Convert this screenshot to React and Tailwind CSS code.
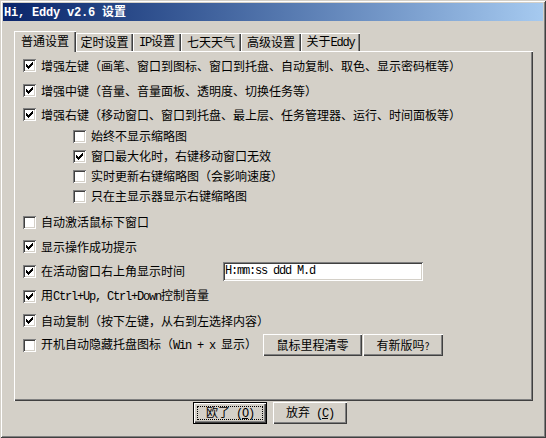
import { useState } from "react";

const CHECK_COLS = [2, 3, 4, 3, 2, 1, 0];

const CheckBox = ({ checked }) => (
  <div className="w-[13px] h-[13px] shrink-0 bg-white shadow-[inset_1px_1px_#808080,inset_-1px_-1px_#ffffff,inset_2px_2px_#404040,inset_-2px_-2px_#d4d0c8]">
    {checked && (
      <svg width="13" height="13" className="block">
        {CHECK_COLS.map((s, i) => (
          <rect key={i} x={3 + i} y={3 + s} width="1" height="3" fill="#000" />
        ))}
      </svg>
    )}
  </div>
);

// latin text in the dialog is half width (6px per char)
const L = ({ children }) => (
  <span className="font-['Liberation_Mono',monospace] tracking-[-1.2px]">{children}</span>
);

const Row = ({ checked, h, indent, children }) => (
  <div className={`flex items-center ${h} ${indent || ""}`}>
    <CheckBox checked={checked} />
    <div className="ml-[5px] flex items-center">{children}</div>
  </div>
);

const tabs = [
  { label: "普通设置", w: "w-[62px]" },
  { label: "定时设置", w: "w-[57px]" },
  { label: <span><L>IP</L>设置</span>, w: "w-[48px]" },
  { label: "七天天气", w: "w-[60px]" },
  { label: "高级设置", w: "w-[60px]" },
  { label: <span>关于<L>Eddy</L></span>, w: "w-[59px]" },
];

const Button = ({ w, children }) => (
  <div className={`${w} h-[22px] flex items-center justify-center bg-[#d4d0c8] shadow-[inset_1px_1px_#ffffff,inset_-1px_-1px_#404040,inset_-2px_-2px_#808080]`}>
    {children}
  </div>
);

export default function App() {
  const [active] = useState(0);

  return (
    <div className="w-[546px] h-[438px] bg-[#d4d0c8] p-[3px] flex flex-col text-[12px] leading-[14px] text-black font-['Noto_Sans_CJK_SC',sans-serif] shadow-[inset_1px_1px_#d4d0c8,inset_-1px_-1px_#404040,inset_2px_2px_#ffffff,inset_-2px_-2px_#808080] overflow-hidden">
      {/* title bar */}
      <div className="h-[18px] flex items-center pl-[1px] bg-gradient-to-r from-[#0a246a] to-[#a6caf0] text-white font-bold">
        <span className="whitespace-pre">
          <span className="font-['Liberation_Mono',monospace] tracking-[-0.2px]">Hi, Eddy v2.6 </span>设置
        </span>
      </div>

      {/* tabs */}
      <div className="mt-[10px] ml-[11px] flex items-end h-[20px]">
        {tabs.map((t, i) =>
          i === active ? (
            <div
              key={i}
              className={`${t.w} h-[21px] -mb-[1px] relative z-10 bg-[#d4d0c8] flex items-center justify-center pb-[1px] shadow-[inset_1px_1px_#ffffff,inset_-1px_0_#404040,inset_-2px_0_#808080]`}
            >
              {t.label}
            </div>
          ) : (
            <div
              key={i}
              className={`${t.w} h-[18px] bg-[#d4d0c8] flex items-center justify-center shadow-[inset_1px_1px_#ffffff,inset_-1px_0_#404040,inset_-2px_0_#808080]`}
            >
              {t.label}
            </div>
          )
        )}
      </div>

      {/* panel */}
      <div className="ml-[11px] w-[519px] h-[350px] pt-[2px] pl-[9px] flex flex-col shadow-[inset_1px_1px_#ffffff,inset_-1px_-1px_#404040,inset_-2px_-2px_#808080]">
        <Row checked h="h-[25px]">增强左键（画笔、窗口到图标、窗口到托盘、自动复制、取色、显示密码框等）</Row>
        <Row checked h="h-[25px]">增强中键（音量、音量面板、透明度、切换任务等）</Row>
        <Row checked h="h-[23px]">增强右键（移动窗口、窗口到托盘、最上层、任务管理器、运行、时间面板等）</Row>
        <Row h="h-[20px]" indent="pl-[50px]">始终不显示缩略图</Row>
        <Row checked h="h-[20px]" indent="pl-[50px]">窗口最大化时，右键移动窗口无效</Row>
        <Row h="h-[20px]" indent="pl-[50px]">实时更新右键缩略图（会影响速度）</Row>
        <Row h="h-[20px]" indent="pl-[50px]">只在主显示器显示右键缩略图</Row>
        <div className="h-[4px]" />
        <Row h="h-[24.6px]">自动激活鼠标下窗口</Row>
        <Row checked h="h-[24.6px]">显示操作成功提示</Row>
        <Row checked h="h-[24.6px]">
          <span className="w-[182px]">在活动窗口右上角显示时间</span>
          <div className="w-[200px] h-[19px] bg-white flex items-center pl-[2px] shadow-[inset_1px_1px_#808080,inset_-1px_-1px_#ffffff,inset_2px_2px_#404040,inset_-2px_-2px_#d4d0c8]">
            <L>H:mm:ss ddd M.d</L>
          </div>
        </Row>
        <Row checked h="h-[24.6px]">
          <span>
            用<L>Ctrl+Up, Ctrl+Down</L>控制音量
          </span>
        </Row>
        <Row checked h="h-[24.6px]">自动复制（按下左键，从右到左选择内容）</Row>
        <Row h="h-[24.6px]">
          <span className="w-[222px] whitespace-pre">
            开机自动隐藏托盘图标（<L>Win + x </L>显示）
          </span>
          <Button w="w-[99px]">鼠标里程清零</Button>
          <div className="w-[1px]" />
          <Button w="w-[80px]">
            <span>
              有新版吗<span className="text-[10px]">?</span>
            </span>
          </Button>
        </Row>
      </div>

      {/* bottom buttons */}
      <div className="mt-[1px] ml-[190px] flex gap-[6px]">
        <div className="w-[74px] h-[22px] border border-black p-[3px] bg-[#d4d0c8] shadow-[inset_1px_1px_#ffffff,inset_-1px_-1px_#404040,inset_-2px_-2px_#808080]">
          <div className="w-full h-full border border-dotted border-black flex items-center justify-center">
            <span className="whitespace-pre">
              欧了<L> (<u>O</u>)</L>
            </span>
          </div>
        </div>
        <Button w="w-[74px]">
          <span className="whitespace-pre">
            放弃<L> (<u>C</u>)</L>
          </span>
        </Button>
      </div>
    </div>
  );
}
